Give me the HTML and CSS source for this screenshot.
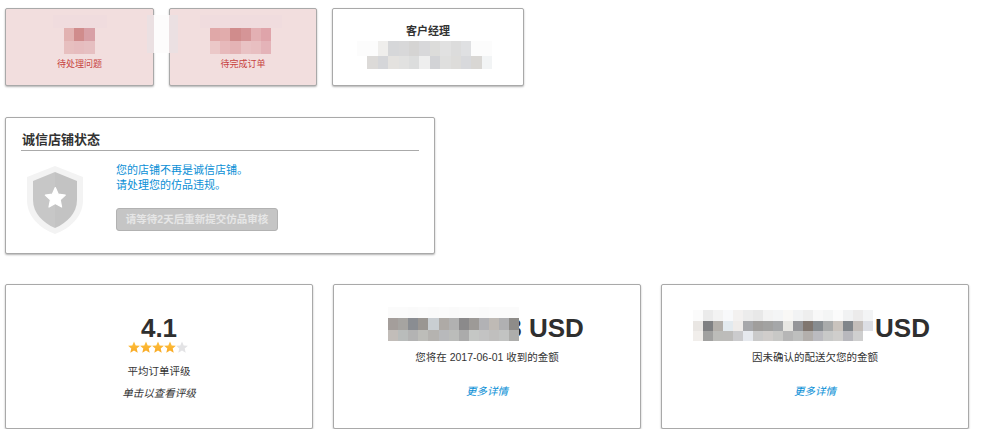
FILE: index.html
```html
<!DOCTYPE html>
<html lang="zh-CN">
<head>
<meta charset="utf-8">
<title>店铺概览</title>
<link rel="stylesheet" href="styles.css">
</head>
<body>
<main class="page">
  <section class="row row-top">
    <div class="spill"></div>
    <article class="card tile tile-alert tile-one">
      <div class="mosaic">
        <div class="m-row halo one-halo"></div>
        <div class="m-row m-13 c10"><i style="background:#e2b2b1"></i><i style="background:#d08c8c"></i><i style="background:#d8a0a6"></i></div>
        <div class="m-row m-13 c10"><i style="background:#e7bfbf"></i><i style="background:#e6bcbe"></i><i style="background:#e6bfc1"></i></div>
      </div>
      <p class="tile-label">待处理问题</p>
    </article>
    <article class="card tile tile-alert tile-two">
      <div class="mosaic shift">
        <div class="m-row halo two-halo"></div>
        <div class="m-row m-13 c10"><i style="background:#e0a8a8"></i><i style="background:#e1acac"></i><i style="background:#d08c8c"></i><i style="background:#d59597"></i><i style="background:#e3b0b3"></i><i style="background:#dfa4aa"></i></div>
        <div class="m-row m-13 c10"><i style="background:#ebc8c8"></i><i style="background:#e7b9bb"></i><i style="background:#e4b3b5"></i><i style="background:#e9c2c4"></i><i style="background:#e8bfc1"></i><i style="background:#e4b3b8"></i></div>
      </div>
      <p class="tile-label">待完成订单</p>
    </article>
    <article class="card tile tile-manager">
      <h3 class="manager-title">客户经理</h3>
      <div class="mosaic manager-mosaic">
        <div class="m-row m-15 c104"><i style="background:#fcfcfc"></i><i style="background:#fcfcfc"></i><i style="background:#efeeec"></i><i style="background:#d6d7d9"></i><i style="background:#d8d8d9"></i><i style="background:#d5d4d3"></i><i style="background:#d8d8da"></i><i style="background:#dcdcda"></i><i style="background:#e1e1e1"></i><i style="background:#dcdcdc"></i><i style="background:#dfe0e2"></i><i style="background:#fcfcfc"></i><i style="background:#fcfcfc"></i></div>
        <div class="m-row m-13 c104"><i style="background:#ffffff"></i><i style="background:#dcdad8"></i><i style="background:#d5d6d9"></i><i style="background:#e4e2df"></i><i style="background:#e1e1e0"></i><i style="background:#dcdddd"></i><i style="background:#eeeeee"></i><i style="background:#d2d3d6"></i><i style="background:#dfdfde"></i><i style="background:#dddcda"></i><i style="background:#d8d9dc"></i><i style="background:#d9d7d4"></i><i style="background:#f2f4f5"></i></div>
      </div>
    </article>
  </section>

  <section class="card status">
    <h2 class="status-title">诚信店铺状态</h2>
    <div class="status-body">
      <svg class="shield" viewBox="0 0 56 68" width="56" height="68" aria-hidden="true">
        <path d="M28 0 L56 11 V34 C56 50 44 62 28 68 C12 62 0 50 0 34 V11 Z" fill="#f3f3f3"/>
        <path d="M28 6 L6 15 V34 C6 47 16 57 28 62 Z" fill="#c7c7c7"/>
        <path d="M28 6 L50 15 V34 C50 47 40 57 28 62 Z" fill="#c3c3c3"/>
        <path d="M28.3 21.5 L31.3 28.2 L38.3 29.1 L33.2 33.9 L34.6 41 L28.3 37.5 L22 41 L23.4 33.9 L18.3 29.1 L25.3 28.2 Z" fill="#ffffff" stroke="#ffffff" stroke-width="1.2" stroke-linejoin="round"/>
      </svg>
      <div class="status-text">
        <p class="status-msg">您的店铺不再是诚信店铺。<br>请处理您的仿品违规。</p>
        <button class="status-btn" type="button" disabled>请等待2天后重新提交仿品审核</button>
      </div>
    </div>
  </section>

  <section class="row row-bottom">
    <article class="card stat stat-rating">
      <div class="rating-value">4.1</div>
      <svg class="stars" viewBox="0 0 60 13" width="60" height="13" aria-hidden="true">
        <defs>
          <linearGradient id="gold" x1="0" y1="0" x2="0" y2="1"><stop offset="0" stop-color="#fdc13f"/><stop offset="1" stop-color="#f9a923"/></linearGradient>
          <polygon id="st" points="6,0.5 7.7,4.4 11.9,4.8 8.7,7.6 9.7,11.8 6,9.6 2.3,11.8 3.3,7.6 0.1,4.8 4.3,4.4"/>
        </defs>
        <use href="#st" x="0" fill="url(#gold)"/>
        <use href="#st" x="12" fill="url(#gold)"/>
        <use href="#st" x="24" fill="url(#gold)"/>
        <use href="#st" x="36" fill="url(#gold)"/>
        <use href="#st" x="48" fill="#e3e3e5"/>
      </svg>
      <p class="stat-label rating-label">平均订单评级</p>
      <p class="rating-hint">单击以查看评级</p>
    </article>

    <article class="card stat">
      <div class="amount amount-paid">
        <div class="mosaic amount-mosaic">
          <div class="m-row m-11 c101"><i style="background:#fbfbfb"></i><i style="background:#fbfbfb"></i><i style="background:#fafafa"></i><i style="background:#fbfbfb"></i><i style="background:#fafafa"></i><i style="background:#fbfbfb"></i><i style="background:#fafafa"></i><i style="background:#fbfbfb"></i><i style="background:#fbfbfb"></i><i style="background:#fafafa"></i><i style="background:#fbfbfb"></i><i style="background:#fbfbfb"></i><i style="background:#fbfbfb"></i></div>
          <div class="m-row m-115 c101"><i style="background:#a49e9b"></i><i style="background:#a6a4a1"></i><i style="background:#8a8d92"></i><i style="background:#9a9692"></i><i style="background:#c9ced2"></i><i style="background:#aeaaa6"></i><i style="background:#b1b1b1"></i><i style="background:#8b8a8b"></i><i style="background:#9d9a97"></i><i style="background:#b2b2b5"></i><i style="background:#bfbab5"></i><i style="background:#b0b0b2"></i><i style="background:#8e8c89"></i></div>
          <div class="m-row m-115 c101"><i style="background:#c2bdb9"></i><i style="background:#b9bcbb"></i><i style="background:#b3b3b3"></i><i style="background:#bdbdb9"></i><i style="background:#b5b3b0"></i><i style="background:#b8b9bb"></i><i style="background:#bbbcba"></i><i style="background:#ababab"></i><i style="background:#c5c7c5"></i><i style="background:#c3c3c3"></i><i style="background:#c0bfbe"></i><i style="background:#c2c3c2"></i><i style="background:#adadab"></i></div>
        </div>
        <span class="amount-text peek">3 USD</span>
      </div>
      <p class="stat-label">您将在 2017-06-01 收到的金额</p>
      <a class="more" href="#">更多详情</a>
    </article>

    <article class="card stat">
      <div class="amount amount-owed">
        <div class="mosaic amount-mosaic">
          <div class="m-row m-11 c100"><i style="background:#fbfbfb"></i><i style="background:#ebebeb"></i><i style="background:#f3f3f3"></i><i style="background:#f8f9fb"></i><i style="background:#f3f1f0"></i><i style="background:#ececec"></i><i style="background:#e8e8e8"></i><i style="background:#f3f3f3"></i><i style="background:#f4f5f6"></i><i style="background:#f9f8f6"></i><i style="background:#f2f3f4"></i><i style="background:#eeeeee"></i><i style="background:#f8f8f8"></i><i style="background:#f4f5f5"></i><i style="background:#fbfbfb"></i><i style="background:#f1f2f3"></i><i style="background:#ecebeb"></i><i style="background:#f3f4f5"></i></div>
          <div class="m-row m-10 c100"><i style="background:#e9e6e3"></i><i style="background:#7f8082"></i><i style="background:#b3afaa"></i><i style="background:#e3eaef"></i><i style="background:#efecea"></i><i style="background:#a7a8ab"></i><i style="background:#a09e9c"></i><i style="background:#a2a2a1"></i><i style="background:#a5a7a9"></i><i style="background:#e8e7e3"></i><i style="background:#959699"></i><i style="background:#80766f"></i><i style="background:#878c90"></i><i style="background:#a9abab"></i><i style="background:#c9c3bd"></i><i style="background:#80858a"></i><i style="background:#c3bdb9"></i><i style="background:#dcdee4"></i></div>
          <div class="m-row m-10 c100"><i style="background:#f1eeeb"></i><i style="background:#a1a1a0"></i><i style="background:#bcbcb9"></i><i style="background:#bdbcba"></i><i style="background:#cbcbcd"></i><i style="background:#e6e9ee"></i><i style="background:#cacaca"></i><i style="background:#d0cdcb"></i><i style="background:#c8c8c6"></i><i style="background:#b6b6b6"></i><i style="background:#bebfbe"></i><i style="background:#b3afac"></i><i style="background:#bbbbc0"></i><i style="background:#c8c9c8"></i><i style="background:#cfcecc"></i><i style="background:#b8b8bd"></i><i style="background:#cfcfcf"></i></div>
        </div>
        <span class="amount-text tail">USD</span>
      </div>
      <p class="stat-label">因未确认的配送欠您的金额</p>
      <a class="more" href="#">更多详情</a>
    </article>
  </section>
</main>
</body>
</html>
```
FILE: styles.css
```css
* { box-sizing: border-box; }
html, body { margin: 0; padding: 0; background: #fff; }
body {
  font-family: "Liberation Sans", "Noto Sans CJK SC", sans-serif;
  color: #333;
  font-size: 10.5px;
}
p, h2, h3 { margin: 0; }
.page { padding: 8px 0 0 5px; }
.row { display: flex; position: relative; }
.row-top { gap: 15px; }
.row-bottom { gap: 20px; margin-top: 30px; }
.card {
  background: #fff;
  border: 1px solid #a9a9a9;
  border-radius: 2px;
  box-shadow: 0 1px 2px rgba(0, 0, 0, .3);
}

/* pixelated blocks */
.mosaic { display: flex; flex-direction: column; }
.m-row { display: flex; flex: none; }
.m-row i { display: block; flex: none; height: 100%; }
.c10 i { width: 10.2px; }
.c104 i { width: 10.4px; }
.c101 i { width: 10.1px; }
.c100 i { width: 10px; }
.m-13 { height: 13px; }
.m-15 { height: 15px; }
.m-11 { height: 11px; }
.m-115 { height: 11.5px; }
.m-10 { height: 10px; }
.halo { height: 13px; background: #f0dcde; }
.one-halo { width: 54px; margin-left: -11px; }
.two-halo { width: 82px; margin-left: -10px; }
.spill {
  position: absolute;
  left: 142px;
  top: 7px;
  width: 31px;
  height: 38px;
  z-index: 2;
  background: linear-gradient(90deg, #ebe0e2 0 7px, #fdfcfc 7px 22px, #ebe0e2 22px);
}

/* top tiles */
.tile {
  height: 78px;
  display: flex;
  flex-direction: column;
  align-items: center;
}
.tile-alert { background: #f2dede; padding-top: 6px; }
.tile-one { width: 149px; }
.tile-two { width: 148px; }
.tile-one .mosaic { width: 31px; }
.tile-two .mosaic { width: 62px; }
.shift { margin-right: 4px; }
.tile-label {
  font-size: 9px;
  line-height: 14px;
  margin-top: 3px;
  color: #c7423f;
}
.tile-manager { width: 192px; padding-top: 14px; }
.manager-title {
  font-size: 11px;
  font-weight: 700;
  line-height: 17px;
  color: #333;
}
.manager-mosaic { margin-right: 6px; margin-top: 1px; width: 136px; }

/* status */
.status {
  width: 430px;
  height: 137px;
  margin-top: 31px;
  padding: 13px 15px 0;
}
.status-title {
  font-size: 13px;
  font-weight: 700;
  line-height: 18px;
  height: 20px;
  padding-left: 1px;
  border-bottom: 1px solid #aaa;
  color: #333;
}
.status-body { display: flex; }
.shield { flex: none; margin: 15px 0 0 6px; }
.status-text { margin: 12px 0 0 33px; }
.status-msg { font-size: 11px; line-height: 15px; color: #0a8fd6; }
.status-btn {
  display: block;
  width: 162px;
  height: 23px;
  margin-top: 15px;
  padding: 0;
  font: 700 10.5px/21px "Liberation Sans", "Noto Sans CJK SC", sans-serif;
  color: #e6e6e6;
  background: #c5c5c5;
  border: 1px solid #b2b2b2;
  border-radius: 3px;
}

/* bottom stats */
.stat {
  width: 308px;
  height: 145px;
  padding-top: 22px;
  display: flex;
  flex-direction: column;
  align-items: center;
}
.stat-rating { padding-top: 30px; }
.rating-value {
  font-size: 26px;
  font-weight: 700;
  line-height: 26px;
  color: #2f2f2f;
}
.stars { display: block; margin-right: 2px; }
.stat-label { line-height: 14px; margin-top: 9px; color: #333; }
.rating-label { margin-top: 10px; }
.rating-hint { font-style: italic; line-height: 14px; margin-top: 8px; color: #333; }
.amount { display: flex; align-items: flex-end; height: 34px; }
.amount-paid { margin-right: 2px; }
.amount-owed { margin-right: 7px; }
.amount-mosaic { position: relative; z-index: 1; }
.amount-text {
  font-size: 26px;
  font-weight: 700;
  line-height: 28px;
  white-space: pre;
  color: #2f2f2f;
}
.peek { margin-left: -12px; margin-bottom: -1px; }
.tail { margin-left: 2px; margin-bottom: -1px; }
.more {
  margin-top: 20px;
  font-style: italic;
  line-height: 14px;
  color: #0a8fd6;
  text-decoration: none;
}
```
